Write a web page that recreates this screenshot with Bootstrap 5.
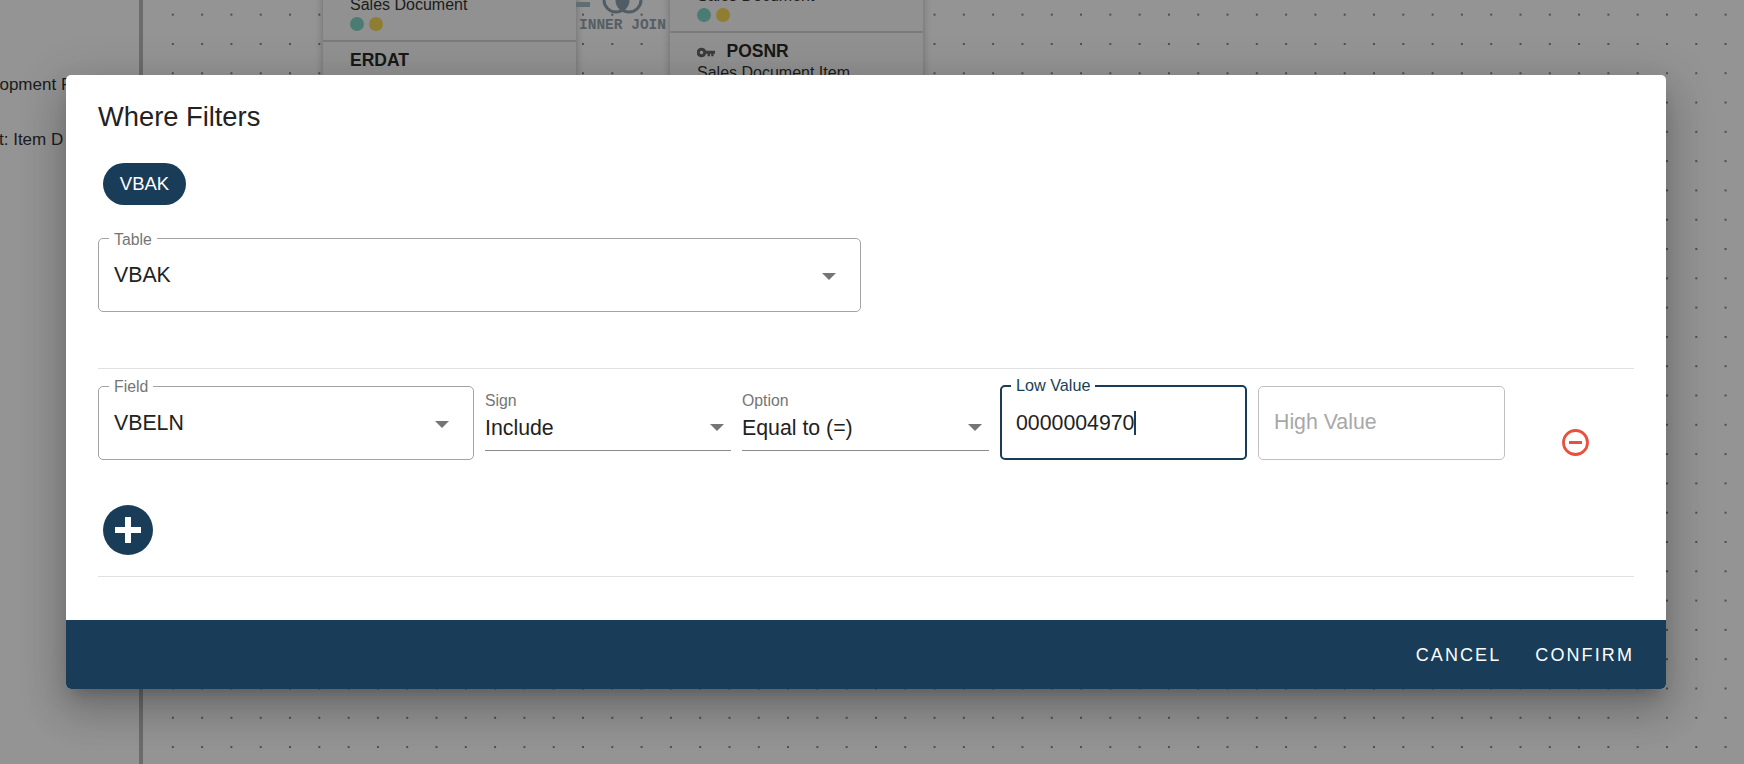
<!DOCTYPE html>
<html lang="en">
<head>
<meta charset="utf-8">
<title>Where Filters</title>
<link href="https://cdn.jsdelivr.net/npm/bootstrap@5.3.0/dist/css/bootstrap.min.css" rel="stylesheet">
<style>
html,body{height:100%;margin:0;overflow:hidden;font-family:"Liberation Sans",Arial,sans-serif;color:#222;background:#fff}
.stage{position:fixed;inset:0;overflow:hidden;background:#fff}
.sidepanel{position:absolute;left:0;top:0;bottom:0;width:143px;border-right:4px solid #bbb;background:#fff}
.sidetext{position:absolute;font-size:17px;white-space:nowrap;color:#333}
.flow{position:absolute;left:150px;right:0;top:0;bottom:0;background-color:#fff;background-image:radial-gradient(circle at center,#333 0.55px,transparent 0.9px);background-size:29.3px 29.3px;background-position:8.2px 0px}
.node{position:absolute;width:253px;top:-30px;height:200px;background:#fafafa;box-shadow:0 2px 8px rgba(0,0,0,.28);font-size:16px;line-height:21px;color:#333}
.node-a{left:323px}
.node-b{left:670px;top:-39px}
.attr{padding:24px 27px 0;height:72px;border-bottom:2px solid #d5d5d5}
.attr-next{padding-top:7.5px;border:0}
.attr b{font-size:17.5px;color:#2a2a2a}
.attr .key-name{margin-left:11.5px}
.pip{display:inline-block;width:14px;height:14px;border-radius:50%;margin-right:5px}
.pip-g{background:#80d6c6}.pip-y{background:#f5d857}
.joinlabel{position:absolute;left:579px;top:17px;font:bold 14.5px "Liberation Mono",monospace;color:#94a3ae;white-space:nowrap}
.joinart{position:absolute;left:575px;top:-12px}
.shade{position:fixed;inset:0;background:rgba(0,0,0,.42)}
.dlg{position:fixed;left:66px;top:75px;width:1600px;height:614px;border:0;border-radius:5px;overflow:hidden;display:flex;flex-direction:column;background:#fff;box-shadow:0 11px 15px -7px rgba(0,0,0,.2),0 24px 38px 3px rgba(0,0,0,.14),0 9px 46px 8px rgba(0,0,0,.12)}
.dlg-title{font-size:27.3px;font-weight:400;line-height:32px;margin:0;color:#222;padding:26px 32px 0}
.dlg-body{flex:1 1 auto;padding:0 32px}
.chip-x{display:inline-flex;align-items:center;justify-content:center;height:42px;width:83px;margin:30px 0 0 5px;border-radius:21px;background:#193d59;color:#fff;font-size:18.5px}
.outl{position:relative;border:1px solid #a3a3a3;border-radius:5px;height:74px;padding:24px 15px 0;font-size:21.3px;line-height:24px;color:#222;background:#fff}
.outl-table{width:763px;margin-top:33px}
.outl-table .lbl{top:-8px}
.lbl{position:absolute;left:10px;top:-9px;padding:0 5px;background:#fff;font-size:15.8px;line-height:17px;color:#757575}
.caret-x{position:absolute;width:0;height:0;border-left:7px solid transparent;border-right:7px solid transparent;border-top:7px solid #757575}
.outl>.caret-x{right:24px;top:34px}
.divide{height:1px;background:#e1e1e1;border:0;opacity:1;margin:0}
.divide-a{margin-top:56px}
.fieldrow{display:flex;gap:11px;margin-top:17px;height:74px}
.w-field{width:376px;flex:none}
.w-sign{width:246px;flex:none}
.w-opt{width:247px;flex:none}
.w-low{width:247px;flex:none}
.w-high{width:247px;flex:none}
.w-act{width:118px;flex:none;display:flex;align-items:flex-end;justify-content:center;padding:0 0 4px 1px}
.under{position:relative;height:65px;border-bottom:1px solid #8c8c8c;font-size:21.3px;line-height:24px;color:#222;padding-top:30px}
.under .ulbl{position:absolute;left:0;top:6px;font-size:15.8px;line-height:18px;color:#757575}
.under>.caret-x{right:7px;top:38px}
.focus-x{border:2px solid #193d59;margin-top:-1px;height:75px;padding:23.5px 14px 0}
.focus-x .lbl{color:#193d59;left:9px;top:-10px;font-size:16.2px}
.cursor-x{display:inline-block;width:2px;height:24px;background:#193d59;vertical-align:-5px}
.hi-in{display:block;width:100%;height:70px;border:0;outline:0;padding:0 15px;font-size:21.3px;color:#222;background:transparent;border-radius:5px}
.hi-in::placeholder{color:#a8a8a8;opacity:1}
.outl-hi{padding:0;border-color:#c0c0c0}
.round-btn{display:flex;width:50px;height:50px;align-items:center;justify-content:center;border:0;padding:0;margin:45px 0 0 5px;border-radius:50%;background:#193d59}
.divide-b{margin-top:21px}
.dlg-foot{flex:none;height:69px;margin:0;background:#193d59;padding:2px 32px 0;display:flex;align-items:center;justify-content:flex-end;gap:34px;border:0;border-radius:0}
.foot-btn{background:none;border:0;padding:0;color:#fff;font-size:18px;letter-spacing:2.1px;line-height:21px}
</style>
</head>
<body>
<div class="stage">
  <div class="sidepanel">
    <div class="sidetext" style="left:-44px;top:72px">Development F</div>
    <div class="sidetext" style="left:-1px;top:127px">t: Item D</div>
  </div>
  <div class="flow"></div>
  <div class="node node-a">
    <div class="attr">Sales Document<br><span class="pip pip-g"></span><span class="pip pip-y"></span></div>
    <div class="attr attr-next"><b>ERDAT</b><br>Created On</div>
  </div>
  <svg class="joinart" width="90" height="28" viewBox="0 0 90 28"><rect x="1" y="14" width="14" height="5" fill="#a9bac6"/><circle cx="41" cy="12" r="12" fill="none" stroke="#8aa0b0" stroke-width="3"/><circle cx="54" cy="12" r="12" fill="none" stroke="#8aa0b0" stroke-width="3"/><path d="M47.5 2a12 12 0 0 1 0 20a12 12 0 0 1 0-20z" fill="#8aa0b0"/></svg>
  <div class="joinlabel">INNER JOIN</div>
  <div class="node node-b">
    <div class="attr">Sales Document<br><span class="pip pip-g"></span><span class="pip pip-y"></span></div>
    <div class="attr attr-next"><svg width="18" height="11" viewBox="0 0 18 11"><circle cx="4.5" cy="5.5" r="3.3" fill="none" stroke="#666" stroke-width="3"/><path d="M8 3.8h10v3h-1.4V9.2h-2.4V6.8h-1.2v2.4h-2.4V6.8H8z" fill="#666"/></svg><b class="key-name">POSNR</b><br>Sales Document Item</div>
  </div>
  <div class="shade"></div>
</div>

<div class="modal-content dlg" role="dialog" aria-label="Where Filters">
  <h2 class="dlg-title">Where Filters</h2>
  <div class="dlg-body">
    <span class="chip-x">VBAK</span>
    <div class="outl outl-table"><span class="lbl">Table</span>VBAK<span class="caret-x"></span></div>
    <hr class="divide divide-a">
    <div class="fieldrow">
      <div class="outl w-field"><span class="lbl">Field</span>VBELN<span class="caret-x"></span></div>
      <div class="under w-sign"><span class="ulbl">Sign</span>Include<span class="caret-x"></span></div>
      <div class="under w-opt"><span class="ulbl">Option</span>Equal to (=)<span class="caret-x"></span></div>
      <div class="outl w-low focus-x"><span class="lbl">Low Value</span>0000004970<span class="cursor-x"></span></div>
      <div class="outl w-high outl-hi"><input class="hi-in" type="text" placeholder="High Value" aria-label="High Value"></div>
      <div class="w-act"><svg width="27" height="27" viewBox="0 0 27 27" aria-label="Remove"><circle cx="13.5" cy="13.5" r="12" fill="none" stroke="#e8503f" stroke-width="2.8"/><rect x="7" y="12" width="13" height="3" fill="#e8503f"/></svg></div>
    </div>
    <button class="round-btn" type="button" aria-label="Add"><svg width="26" height="26" viewBox="0 0 26 26"><path d="M10 0h6v10h10v6H16v10h-6V16H0v-6h10z" fill="#fff"/></svg></button>
    <hr class="divide divide-b">
  </div>
  <div class="modal-footer dlg-foot">
    <button class="foot-btn" type="button">CANCEL</button>
    <button class="foot-btn" type="button">CONFIRM</button>
  </div>
</div>
<script src="https://cdn.jsdelivr.net/npm/bootstrap@5.3.0/dist/js/bootstrap.bundle.min.js"></script>
</body>
</html>
